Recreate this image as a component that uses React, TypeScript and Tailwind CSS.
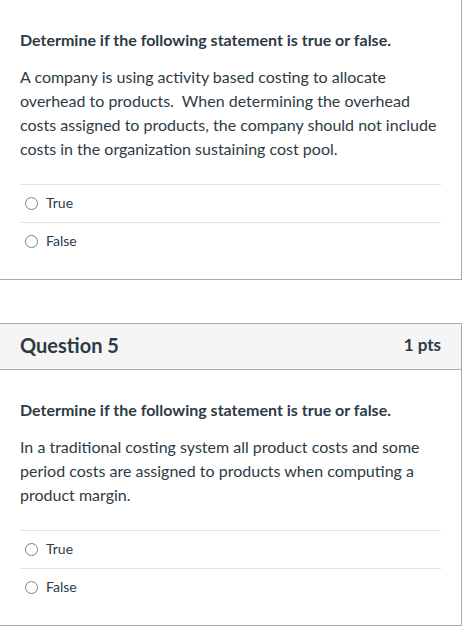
import React from "react";

type Question = {
  title?: string;
  points?: string;
  prompt: string;
  body: string;
};

const QUESTIONS: Question[] = [
  {
    prompt: "Determine if the following statement is true or false.",
    body:
      "A company is using activity based costing to allocate overhead to products.\u00a0 When determining the overhead costs assigned to products, the company should not include costs in the organization sustaining cost pool.",
  },
  {
    title: "Question 5",
    points: "1 pts",
    prompt: "Determine if the following statement is true or false.",
    body:
      "In a traditional costing system all product costs and some period costs are assigned to products when computing a product margin.",
  },
];

const Option = ({ label }: { label: string }) => (
  <div className="flex h-[38px] items-center border-t border-[#dfe2e4]">
    <span className="ml-[5px] h-[13px] w-[13px] rounded-full border border-[#7a7f82] bg-white" />
    <span className="ml-[8px] pb-[2px] text-[14px] text-[#2d3b45]">{label}</span>
  </div>
);

const QuestionCard = ({ q, first }: { q: Question; first?: boolean }) => (
  <div
    className={
      "w-[462px] border-r border-b border-[#aaaaaa] bg-white " +
      (first ? "" : "border-t mt-[43px]")
    }
  >
    {q.title && (
      <div className="flex h-[46px] items-center justify-between border-b border-[#aaaaaa] bg-[#f5f5f5] px-[20px]">
        <span className="pb-[3px] text-[20px] font-bold text-[#2d3b45]">{q.title}</span>
        <span className="pb-[3px] text-[17px] font-bold text-[#2d3b45]">{q.points}</span>
      </div>
    )}
    <div className="px-[20px] pt-[28px] pb-[19px]">
      <p className="text-[16px] font-bold leading-[24px] text-[#2d3b45]">{q.prompt}</p>
      <p className="mt-[13px] text-[16px] leading-[24px] text-[#2d3b45]">{q.body}</p>
      <div className="mt-[23px]">
        <Option label="True" />
        <Option label="False" />
      </div>
    </div>
  </div>
);

export default function App() {
  return (
    <div
      className="min-h-[628px] w-[469px] bg-white"
      style={{ fontFamily: "Lato, 'Open Sans', sans-serif" }}
    >
      <QuestionCard q={QUESTIONS[0]} first />
      <QuestionCard q={QUESTIONS[1]} />
    </div>
  );
}
